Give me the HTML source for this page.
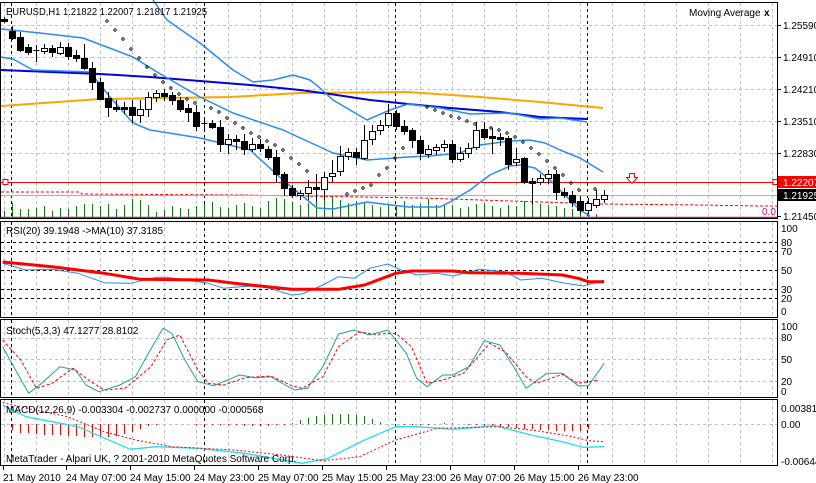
<!DOCTYPE html>
<html><head><meta charset="utf-8"><style>
html,body{margin:0;padding:0;background:#fff;}
svg{display:block;font-family:"Liberation Sans",sans-serif;font-size:10px;}
</style></head><body>
<svg id="s" width="816" height="483" viewBox="0 0 816 483" xmlns="http://www.w3.org/2000/svg">
<rect width="816" height="483" fill="#fff"/>
<g id="grid"></g>
<g id="ind"></g>
<g fill="none" stroke="#000" stroke-width="1">
<rect x="0.5" y="2.5" width="777" height="216"/>
<rect x="0.5" y="221.5" width="777" height="96"/>
<rect x="0.5" y="319.5" width="777" height="78"/>
<rect x="0.5" y="399.5" width="777" height="66"/>
</g>
<g id="txt" fill="#000">
<text x="6" y="15" textLength="201" lengthAdjust="spacingAndGlyphs">EURUSD,H1  1.21822 1.22007 1.21817 1.21925</text>
<text x="689" y="16">Moving Average</text>
<text x="764" y="16" font-weight="bold">x</text>
<text x="783" y="29">1.25590</text>
<text x="783" y="61">1.24910</text>
<text x="783" y="93">1.24210</text>
<text x="783" y="125">1.23510</text>
<text x="783" y="157">1.22830</text>
<rect x="778" y="176" width="38" height="12" fill="#f00"/>
<text x="783" y="186" fill="#fff">1.22207</text>
<rect x="778" y="189" width="38" height="12" fill="#000"/>
<text x="783" y="199" fill="#fff">1.21925</text>
<text x="783" y="220">1.21450</text>
<text x="762" y="215" fill="#c0157a">0.0</text>
<text x="6" y="234">RSI(20) 39.1948  -&gt;MA(10) 37.3185</text>
<text x="781" y="232">100</text><text x="781" y="246">80</text><text x="781" y="255">70</text>
<text x="781" y="274">50</text><text x="781" y="293">30</text><text x="781" y="302">20</text>
<text x="781" y="315">0</text>
<text x="6" y="334">Stoch(5,3,3) 47.1277 28.8102</text>
<text x="781" y="330">100</text><text x="781" y="341">80</text><text x="781" y="363">50</text>
<text x="781" y="385">20</text><text x="781" y="395">0</text>
<text x="6" y="413">MACD(12,26,9) -0.003304 -0.002737 0.000000 -0.000568</text>
<text x="781" y="412">0.003813</text><text x="781" y="428">0.00</text><text x="781" y="465">-0.00644</text>
<text x="6" y="462">MetaTrader - Alpari UK, ? 2001-2010 MetaQuotes Software Corp.</text>
<text x="3" y="481">21 May 2010</text>
<text x="66" y="481">24 May 07:00</text>
<text x="130" y="481">24 May 15:00</text>
<text x="194" y="481">24 May 23:00</text>
<text x="258" y="481">25 May 07:00</text>
<text x="322" y="481">25 May 15:00</text>
<text x="386" y="481">25 May 23:00</text>
<text x="450" y="481">26 May 07:00</text>
<text x="514" y="481">26 May 15:00</text>
<text x="578" y="481">26 May 23:00</text>
</g>
</svg>
<script>
(function(){
var NS="http://www.w3.org/2000/svg";
var g=document.getElementById('grid'), ind=document.getElementById('ind');
function el(p,n,a){var e=document.createElementNS(NS,n);for(var k in a)e.setAttribute(k,a[k]);p.appendChild(e);return e;}
function line(p,x1,y1,x2,y2,c,dash,w){return el(p,'line',{x1:x1,y1:y1,x2:x2,y2:y2,stroke:c,'stroke-width':w||1,'stroke-dasharray':dash||'none'});}
function poly(p,pts,c,w,dash){return el(p,'polyline',{points:pts.map(function(q){return q[0]+','+q[1]}).join(' '),fill:'none',stroke:c,'stroke-width':w||1,'stroke-dasharray':dash||'none','stroke-linejoin':'round'});}
var panels=[[3,218],[222,317],[320,397],[400,465]];
for(var x=4;x<778;x+=32){panels.forEach(function(p){line(g,x+.5,p[0],x+.5,p[1],'#c0c0c0','3,3');});}
[25,57,89,121,153].forEach(function(y){line(g,1,y+.5,777,y+.5,'#c0c0c0','3,3');});
[338,359,381].forEach(function(y){line(g,1,y+.5,777,y+.5,'#c0c0c0','3,3');});
line(g,1,424.5,777,424.5,'#c0c0c0','3,3');
[242,251,270,289,298].forEach(function(y){line(g,1,y+.5,777,y+.5,'#000','3,3');});
[11,204,395,587].forEach(function(x){panels.forEach(function(p){line(g,x+.5,p[0],x+.5,p[1],'#000','3,3');});});
[3,66,130,194,258,322,386,450,514,578].forEach(function(x){line(g,x+.5,466,x+.5,470,'#000');});
[25,57,89,121,153,216].forEach(function(y){line(g,778,y+.5,781,y+.5,'#000');});
var vh=[6,14,8,8,9,11,6,9,8,11,13,13,11,13,8,12,18,17,12,5,7,11,9,8,11,13,15,10,9,12,14,11,9,16,19,18,15,12,14,18,20,22,17,14,16,15,12,10,13,11,16,12,13,18,12,13,12,9,10,13,14,11,9,12,11,16,22,13,12,11,9,8,5,4,3];
for(var i=0;i<vh.length;i++){var xx=4+8*i+.5;line(ind,xx,217,xx,217-vh[i],'#0a7d0a');}
line(ind,1,217.5,777,217.5,'#c0157a',null,1.5);
poly(ind,[[1,192],[80,192],[82,194],[240,195],[420,198],[600,204],[700,205],[760,206],[777,206]],'#f00',1,'3,2');
line(ind,1,195.5,777,195.5,'#b0b0b0');
line(ind,1,182.5,777,182.5,'#f00');
el(ind,'rect',{x:3,y:179.5,width:5,height:5,fill:'#fff',stroke:'#f00'});
el(ind,'rect',{x:773,y:179.5,width:5,height:5,fill:'#fff',stroke:'#f00'});
el(ind,'path',{d:'M629.5,173.5h5v4h3l-5.5,6l-5.5,-6h3z',fill:'#fff',stroke:'#f00'});
poly(ind,[[1,106],[100,99],[230,97],[300,93],[408,92],[480,97],[540,102],[603,108]],'#ffa500',2);
poly(ind,[[1,70],[100,74],[150,77],[200,81],[250,85],[300,90],[330,94],[370,100],[408,104],[450,108],[500,112],[540,117],[587,119]],'#0000e0',2);
var lb='#2a8cf0';
poly(ind,[[153,0],[167,20],[200,43],[233,70],[253,82],[273,80],[293,75],[310,80],[320,88],[333,100],[367,120],[390,110],[408,104],[440,108],[470,114],[510,113],[540,119],[560,118],[587,122]],lb,1.5);
poly(ind,[[1,29],[40,33],[83,38],[133,57],[157,72],[200,97],[233,113],[283,130],[333,153],[367,160],[408,157],[430,156],[460,153],[480,145],[510,141],[530,140],[545,143],[560,150],[580,158],[603,172]],lb,1.5);
poly(ind,[[1,57],[13,59],[33,70],[90,72],[110,97],[133,123],[150,130],[200,138],[250,150],[283,180],[317,208],[333,209],[367,202],[408,207],[440,207],[450,202],[470,190],[490,175],[510,166],[520,165],[535,168],[550,180],[565,195],[580,210],[590,216]],lb,1.5);
var sar=[[107,21],[115,30],[123,39],[131,49],[139,58],[147,67],[155,75],[163,82],[171,88],[179,94],[187,99],[195,103],[211,108],[219,112],[227,118],[235,123],[243,128],[251,133],[259,137],[267,141],[275,145],[283,150],[291,158],[299,164],[307,171],[347,194],[355,191],[363,188],[371,185],[379,175],[387,168],[395,158],[403,148],[427,107],[435,110],[443,113],[451,116],[459,118],[467,121],[475,124],[491,128],[499,130],[507,133],[515,137],[523,142],[531,148],[539,154],[547,161],[555,168],[563,175],[571,183],[579,190],[595,189]];
sar.forEach(function(p){el(ind,'path',{d:'M'+p[0]+','+(p[1]-1.5)+'l1.5,1.5l-1.5,1.5l-1.5,-1.5z',fill:'none',stroke:'#000','stroke-width':.8});});
var C=[
['B',19,21,17,23],['B',31,38,26,40],['B',37,50,32,52],['B',47,52,44,55],['X',50,50,45,62],['W',48,51,44,54],['B',48,52,45,57],['W',47,53,42,55],['B',47,56,43,60],['B',55,58,50,62],
['B',58,68,44,70],['B',68,82,62,90],['B',82,99,78,100],['B',98,107,92,117],['B',107,109,100,112],['B',107,109,102,114],['B',107,115,100,123],['W',109,115,100,123],['W',97,109,92,117],['W',93,97,90,102],
['B',93,96,89,101],['B',95,100,92,105],['B',100,109,97,112],['B',108,112,104,122],['B',112,126,105,131],['X',123,123,120,130],['B',123,127,120,129],['B',127,144,120,152],['W',139,144,134,154],['B',139,141,135,150],
['B',141,149,134,155],['W',144,149,138,152],['B',144,148,139,152],['B',149,157,146,160],['B',157,174,150,183],['B',174,188,172,196],['B',188,195,185,198],['W',193,195,190,200],['W',187,193,180,200],['B',187,189,174,202],
['W',177,189,172,200],['W',173,176,160,182],['W',156,171,146,176],['W',152,156,148,160],['B',152,157,148,165],['W',140,158,125,160],['W',131,139,125,145],['W',125,130,120,135],['W',113,125,104,128],['B',113,126,110,130],
['B',126,131,120,135],['B',130,140,128,148],['B',140,153,136,160],['W',149,154,145,158],['W',147,150,144,155],['W',144,147,140,152],['B',144,159,140,163],['W',153,159,147,162],['W',148,153,143,158],['W',130,147,122,150],
['B',129,137,122,140],['B',136,138,128,154],['B',137,139,133,146],['B',138,164,136,170],['W',159,162,148,166],['B',158,182,157,184],['B',181,182,178,205],['W',178,182,174,185],['W',174,178,170,184],['B',174,192,170,200],
['B',192,195,188,198],['B',195,202,191,207],['B',201,210,196,214],['W',203,210,198,214],['W',199,205,190,208],['W',195,199,190,203]];
for(var i=0;i<C.length;i++){var c=C[i],cx=4+8*i+.5;
 line(ind,cx,c[3],cx,c[4],'#000');
 if(c[0]=='X'){line(ind,cx-3,c[1]+.5,cx+3,c[1]+.5,'#000');}
 else{var h=Math.max(c[2]-c[1],2);el(ind,'rect',{x:cx-3,y:c[1]+.5,width:6,height:h,fill:c[0]=='B'?'#000':'#fff',stroke:'#000'});}
}
function z(pts){return pts.map(function(p){return [+(p[0]/1.92).toFixed(1),+(220+p[1]/3).toFixed(1)];});}
poly(ind,z([[5,130],[50,150],[100,148],[150,160],[200,188],[250,190],[300,172],[320,172],[400,190],[430,205],[460,200],[500,197],[560,225],[580,222],[620,195],[650,170],[680,175],[710,145],[745,132],[770,150],[800,165],[840,160],[870,168],[920,148],[970,155],[1000,180],[1040,175],[1080,188],[1120,198],[1160,180]]),'#2a8cf0',1);
poly(ind,z([[5,126],[100,140],[200,160],[270,178],[400,180],[450,190],[560,208],[650,208],[700,195],[760,160],[790,153],[870,153],[900,158],[1000,160],[1080,165],[1110,175],[1130,185],[1160,185]]),'#f00',3);
poly(ind,z([[5,380],[30,450],[55,520],[80,490],[115,440],[145,450],[165,495],[190,515],[230,495],[260,470],[285,400],[313,325],[330,340],[355,420],[380,485],[410,497],[460,465],[490,473],[520,470],[565,510],[590,505],[620,440],[650,342],[680,330],[710,345],[745,330],[780,400],[800,475],[820,500],[850,465],[870,465],[900,440],[930,362],[960,375],[990,450],[1010,505],[1050,460],[1080,460],[1110,497],[1130,497],[1160,430]]),'#20a0a0',1);
poly(ind,z([[5,360],[40,420],[70,505],[100,490],[140,445],[170,480],[200,510],[240,505],[290,440],[320,360],[345,345],[380,450],[400,490],[430,495],[470,473],[520,468],[560,497],[580,505],[620,470],[650,380],[690,336],[720,343],[760,340],[790,380],[820,490],[850,480],[890,460],[940,370],[970,395],[1010,470],[1030,490],[1080,463],[1110,490],[1150,480]]),'#f00',1,'3,2');
var hist=[0,6,9,9,10,11,11,11,12,12,13,13,13,13,12,10,8,5,2,1,0,0,0,0,1,1,1,1,1,1,2,2,2,2,1,1,-1,-4,-6,-8,-9,-10,-10,-10,-9,-8,-5,-2,0,0,1,1,1,1,0,-1,-1,0,1,1,2,2,3,3,4,5,5,6,6,7,7,7,7,5];
for(var i=0;i<hist.length;i++){var h=hist[i];if(h==0)continue;var xx=4+8*i+.5;line(ind,xx,424,xx,424+h,h>0?'#f00':'#0a7d0a');}
poly(ind,z([[5,555],[50,590],[100,605],[150,620],[250,688],[300,680],[380,685],[470,700],[580,730],[630,715],[700,660],[760,620],[800,620],[870,628],[950,617],[1020,645],[1080,665],[1120,682],[1160,680]]),'#20e0f0',1.3);
poly(ind,z([[5,548],[60,568],[130,590],[200,635],[260,660],[330,680],[450,690],[540,705],[620,722],[690,710],[760,660],[840,625],[960,620],[1030,632],[1100,650],[1130,662],[1160,665]]),'#f00',1,'2,2');
})();
</script>
</body></html>
